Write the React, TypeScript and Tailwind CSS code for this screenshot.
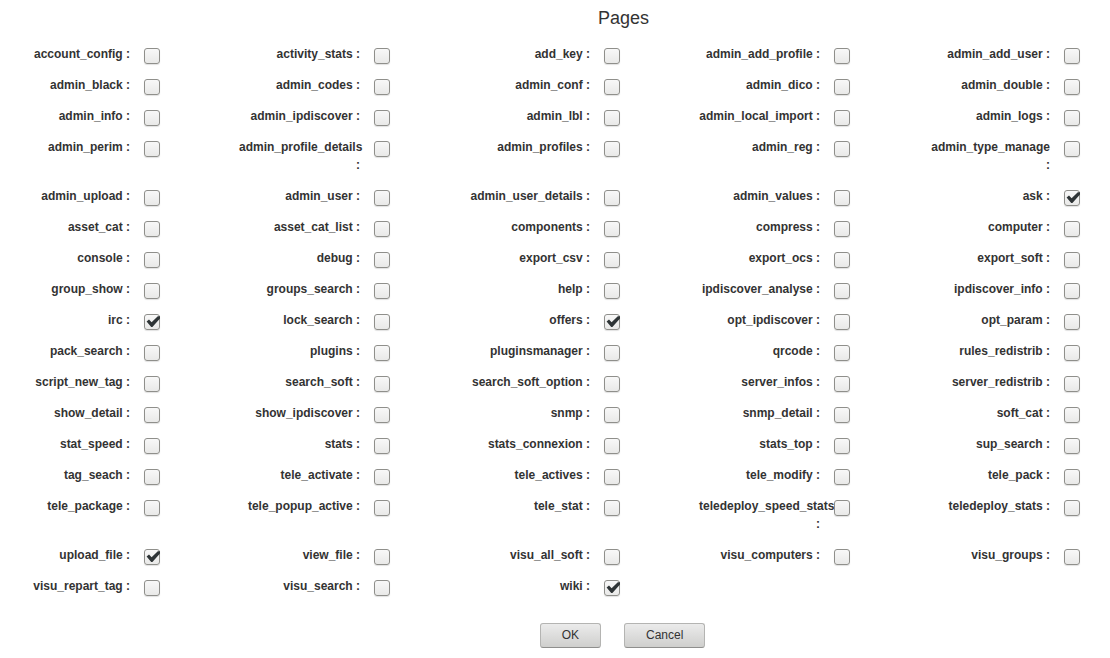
import { useState } from "react";

const pages = [
  "account_config", "activity_stats", "add_key", "admin_add_profile", "admin_add_user",
  "admin_black", "admin_codes", "admin_conf", "admin_dico", "admin_double",
  "admin_info", "admin_ipdiscover", "admin_lbl", "admin_local_import", "admin_logs",
  "admin_perim", "admin_profile_details", "admin_profiles", "admin_reg", "admin_type_manage",
  "admin_upload", "admin_user", "admin_user_details", "admin_values", "ask",
  "asset_cat", "asset_cat_list", "components", "compress", "computer",
  "console", "debug", "export_csv", "export_ocs", "export_soft",
  "group_show", "groups_search", "help", "ipdiscover_analyse", "ipdiscover_info",
  "irc", "lock_search", "offers", "opt_ipdiscover", "opt_param",
  "pack_search", "plugins", "pluginsmanager", "qrcode", "rules_redistrib",
  "script_new_tag", "search_soft", "search_soft_option", "server_infos", "server_redistrib",
  "show_detail", "show_ipdiscover", "snmp", "snmp_detail", "soft_cat",
  "stat_speed", "stats", "stats_connexion", "stats_top", "sup_search",
  "tag_seach", "tele_activate", "tele_actives", "tele_modify", "tele_pack",
  "tele_package", "tele_popup_active", "tele_stat", "teledeploy_speed_stats", "teledeploy_stats",
  "upload_file", "view_file", "visu_all_soft", "visu_computers", "visu_groups",
  "visu_repart_tag", "visu_search", "wiki",
];

const initial = ["ask", "irc", "offers", "upload_file", "wiki"];

function PageOption({ name, checked, onToggle }: { name: string; checked: boolean; onToggle: () => void }) {
  return (
    <div className="flex items-start gap-3.5">
      <label htmlFor={name} className="w-[121px] pb-[13px] text-right text-xs/[18px] font-bold">
        {name} :
      </label>
      <span className="relative mt-[3px] grid size-4 shrink-0">
        <input
          id={name}
          type="checkbox"
          checked={checked}
          onChange={onToggle}
          className="peer col-start-1 row-start-1 size-4 appearance-none rounded-[3px] border border-[#8f8f8b] bg-linear-to-b from-[#f8f8f8] to-[#e9e9e8] shadow-[0_1px_1px_rgba(0,0,0,0.12)]"
        />
        <svg
          viewBox="0 0 16 16"
          className="pointer-events-none invisible col-start-1 row-start-1 size-4 peer-checked:visible"
          aria-hidden="true"
        >
          <path d="M2.6 7.6 5 5.6 7.6 8.2 13.8 2.2H16V4.6L8.4 13H7.2Z" fill="#2e3436" />
        </svg>
      </span>
    </div>
  );
}

function Button({ children, type }: { children: string; type: "submit" | "button" }) {
  return (
    <button
      type={type}
      className="h-[25px] rounded-[3px] border border-[#b4b4b2] border-b-[#8f8f8d] bg-linear-to-b from-[#ebebeb] to-[#cfcfcd] px-[21px] pb-0.5 text-xs"
    >
      {children}
    </button>
  );
}

export default function App() {
  const [selected, setSelected] = useState(initial);
  const toggle = (name: string) =>
    setSelected((s) => (s.includes(name) ? s.filter((n) => n !== name) : [...s, name]));

  return (
    <form
      onSubmit={(e) => e.preventDefault()}
      className="bg-white font-['Liberation_Sans',Arial,sans-serif] text-[#333]"
    >
      <h1 className="pt-1.5 pl-[137px] text-center text-lg/6">Pages</h1>
      <div className="mt-[15px] grid grid-cols-[repeat(5,151px)] justify-between pr-[30px] pl-[9px]">
        {pages.map((name) => (
          <PageOption key={name} name={name} checked={selected.includes(name)} onToggle={() => toggle(name)} />
        ))}
      </div>
      <div className="mt-[15px] flex justify-center gap-[23px] pl-[135px]">
        <Button type="submit">OK</Button>
        <Button type="button">Cancel</Button>
      </div>
    </form>
  );
}
